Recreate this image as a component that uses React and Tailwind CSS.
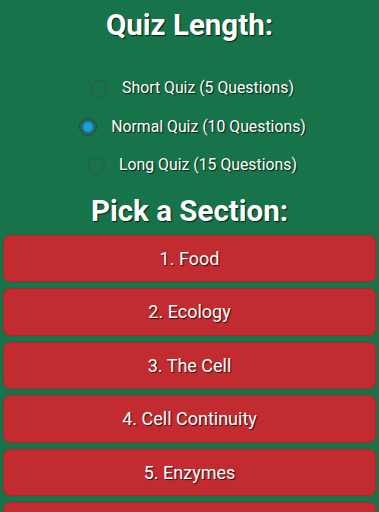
import { useState } from 'react'

const LENGTHS = [
  { id: 5, label: 'Short Quiz (5 Questions)' },
  { id: 10, label: 'Normal Quiz (10 Questions)' },
  { id: 15, label: 'Long Quiz (15 Questions)' },
]

const SECTIONS = ['1. Food', '2. Ecology', '3. The Cell', '4. Cell Continuity', '5. Enzymes', '6. Photosynthesis']

const shadow = '[text-shadow:1px_1px_1px_rgba(0,0,0,0.75)]'

function Radio({ checked }) {
  return checked ? (
    <span className="flex items-center justify-center w-[18px] h-[18px] rounded-full bg-[#236a63] border border-[#1c5148]">
      <span className="w-[10px] h-[10px] rounded-full bg-[#1c9ddd]" />
    </span>
  ) : (
    <span className="w-[17px] h-[17px] rounded-full border border-[#3b5247]" />
  )
}

export default function App() {
  const [length, setLength] = useState(10)

  return (
    <div className="h-[512px] bg-[#17734a] text-white font-['Roboto',sans-serif] overflow-hidden">
      <h1 className={`text-center text-[29.5px] font-bold leading-[34px] pt-[8px] ${shadow}`}>Quiz Length:</h1>

      <div className="mt-[27px] flex flex-col">
        {LENGTHS.map(l => (
          <button key={l.id} onClick={() => setLength(l.id)}
            className="h-[38.5px] pl-[6px] flex items-center justify-center gap-[14px]">
            <Radio checked={length === l.id} />
            <span className={`text-[15.8px] ${shadow}`}>{l.label}</span>
          </button>
        ))}
      </div>

      <h2 className={`text-center text-[29.5px] font-bold leading-[34px] mt-[9px] ${shadow}`}>Pick a Section:</h2>

      <div className="mt-[7px] px-[3px] flex flex-col gap-[6px]">
        {SECTIONS.map(s => (
          <button key={s}
            className={`h-[47.5px] shrink-0 rounded-[7px] bg-[#c22c31] border border-[#a8282b] text-[18px] ${shadow}`}>
            {s}
          </button>
        ))}
      </div>
    </div>
  )
}
